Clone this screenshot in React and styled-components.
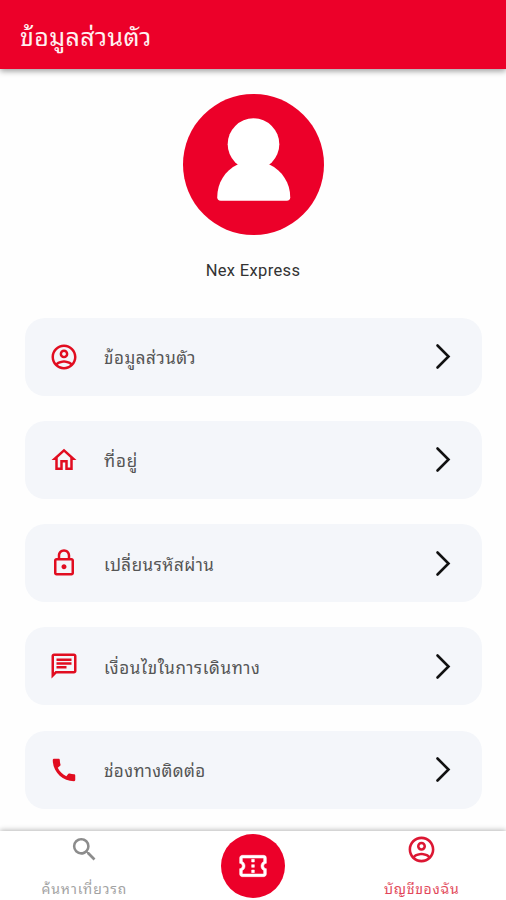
import React from 'react'
import styled, { createGlobalStyle } from 'styled-components'
import {
    MdSearch,
    MdCall,
    MdOutlineHome,
    MdOutlineLock,
    MdOutlineChat,
    MdOutlineConfirmationNumber,
} from 'react-icons/md'

const AccountIcon = ({ size }) => (
    <svg width={size} height={size} viewBox="0 0 24 24" fill="currentColor">
        <path d="M12 2C6.48 2 2 6.48 2 12s4.48 10 10 10 10-4.48 10-10S17.52 2 12 2zM7.07 18.28c.43-.9 3.05-1.78 4.93-1.78s4.51.88 4.93 1.78C15.57 19.36 13.86 20 12 20s-3.57-.64-4.93-1.72zm11.29-1.45c-1.43-1.74-4.9-2.33-6.36-2.33s-4.93.59-6.36 2.33C4.62 15.49 4 13.82 4 12c0-4.41 3.59-8 8-8s8 3.59 8 8c0 1.82-.62 3.49-1.64 4.83zM12 6c-1.94 0-3.5 1.56-3.5 3.5S10.06 13 12 13s3.5-1.56 3.5-3.5S13.94 6 12 6zm0 5c-.83 0-1.5-.67-1.5-1.5S11.17 8 12 8s1.5.67 1.5 1.5S12.83 11 12 11z" />
    </svg>
)

const menu = [
    { label: 'ข้อมูลส่วนตัว', Icon: AccountIcon, spacing: 0.55 },
    { label: 'ที่อยู่', Icon: MdOutlineHome, spacing: 0.9 },
    { label: 'เปลี่ยนรหัสผ่าน', Icon: MdOutlineLock, spacing: 0.5 },
    { label: 'เงื่อนไขในการเดินทาง', Icon: MdOutlineChat, spacing: 0.6 },
    { label: 'ช่องทางติดต่อ', Icon: MdCall, spacing: 0.4 },
]

function App() {
    return (
        <Screen>
            <GlobalStyle />
            <Header>
                <Title>ข้อมูลส่วนตัว</Title>
            </Header>
            <Profile>
                <Avatar viewBox="0 0 142 142">
                    <circle cx="71" cy="71" r="71" fill="#ec0029" />
                    <circle cx="71" cy="50.500" r="26" fill="#fff" />
                    <path d="M55 71H87C100 77 108 90 108 104Q108 107.500 104.500 107.500H38Q34.500 107.500 34.500 104C34.500 90 42 77 55 71Z" fill="#fff" />
                </Avatar>
                <Name>Nex Express</Name>
            </Profile>
            <Menu>
                {menu.map(({ label, Icon, spacing }) => (
                    <MenuItem key={label}>
                        <IconSlot>
                            <Icon size={30} />
                        </IconSlot>
                        <Label $spacing={spacing}>{label}</Label>
                        <Chevron viewBox="0 0 14 24">
                            <path d="M1.500 1.500L12.500 12.500L1.500 23.500" />
                        </Chevron>
                    </MenuItem>
                ))}
            </Menu>
            <TabBar>
                <Tab $color="#8c8c8c">
                    <MdSearch size={31} />
                    <TabLabel $spacing={0.9}>ค้นหาเที่ยวรถ</TabLabel>
                </Tab>
                <TicketButton>
                    <MdOutlineConfirmationNumber size={32} />
                </TicketButton>
                <Tab $color="#dc1733">
                    <AccountIcon size={31} />
                    <TabLabel $spacing={0.7}>บัญชีของฉัน</TabLabel>
                </Tab>
            </TabBar>
        </Screen>
    )
}

export default App

const GlobalStyle = createGlobalStyle`
body {
    margin: 0;
    background: #fff;
}
* {
    box-sizing: border-box;
}
`

const Screen = styled.div`
width: 506px;
height: 900px;
overflow: hidden;
display: flex;
flex-direction: column;
background-color: #fefefe;
font-family: Roboto, "Noto Sans Thai Looped", "Noto Looped Thai", Loma, Waree, Garuda, "Noto Sans Thai", sans-serif;
`

const Header = styled.header`
height: 69px;
flex-shrink: 0;
display: flex;
align-items: center;
padding: 6px 20px 0;
background-color: #ec0029;
box-shadow: 0 2px 6px rgba(0, 0, 0, 0.4);
`

const Title = styled.h1`
margin: 0;
color: #fff0f0;
font-size: 25px;
font-weight: 400;
line-height: 40px;
letter-spacing: 0.4px;
white-space: nowrap;
`

const Profile = styled.section`
height: 248.500px;
flex-shrink: 0;
display: flex;
flex-direction: column;
align-items: center;
padding-top: 25px;
`

const Avatar = styled.svg`
width: 141px;
height: 141px;
margin-left: 1px;
`

const Name = styled.span`
margin-top: 25px;
color: #333;
font-size: 16.500px;
line-height: 22px;
letter-spacing: 0.35px;
`

const Menu = styled.nav`
flex: 1;
min-height: 0;
display: flex;
flex-direction: column;
gap: 25.300px;
padding: 0 24px 0 25px;
`

const MenuItem = styled.div`
height: 78px;
flex-shrink: 0;
display: flex;
align-items: center;
padding: 0 32px 0 24px;
border-radius: 20px;
background-color: #f4f6fa;
`

const IconSlot = styled.span`
width: 30px;
height: 30px;
display: flex;
color: #e10d20;
`

const Label = styled.span`
flex: 1;
margin: 3px 0 0 25px;
color: #555;
font-size: 17px;
line-height: 28px;
letter-spacing: ${({ $spacing }) => $spacing}px;
white-space: nowrap;
`

const Chevron = styled.svg`
width: 14px;
height: 24px;
margin-bottom: 1px;
overflow: visible;
fill: none;
stroke: #111;
stroke-width: 2.600;
stroke-linecap: round;
`

const TabBar = styled.footer`
height: 69px;
flex-shrink: 0;
display: grid;
grid-template-columns: 1fr 1fr 1fr;
justify-items: center;
background-color: #fff;
box-shadow: 0 -1px 5px rgba(0, 0, 0, 0.28);
`

const Tab = styled.div`
display: flex;
flex-direction: column;
align-items: center;
padding-top: 3px;
color: ${({ $color }) => $color};
`

const TabLabel = styled.span`
margin-top: 12px;
font-size: 14px;
line-height: 24px;
letter-spacing: ${({ $spacing }) => $spacing}px;
opacity: 0.8;
white-space: nowrap;
`

const TicketButton = styled.div`
width: 64px;
height: 64px;
margin: 3px 0 0 1px;
display: flex;
align-items: center;
justify-content: center;
border-radius: 50%;
color: white;
background-color: #ec0029;

path {
    stroke: white;
    stroke-width: 0.4px;
}
path[fill='none'] {
    stroke: none;
}
`
